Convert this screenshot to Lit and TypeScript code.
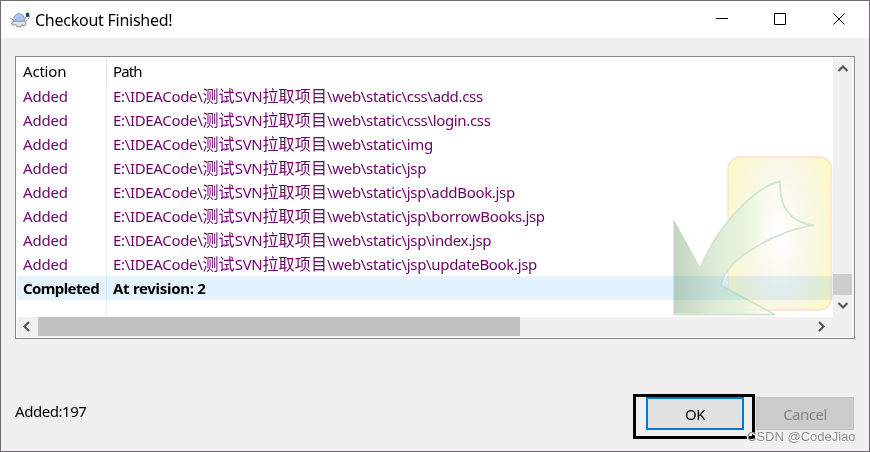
import { LitElement, html, css, svg } from "lit";
import { customElement } from "lit/decorators.js";

const TAILS = [
  "css\\add.css",
  "css\\login.css",
  "img",
  "jsp",
  "jsp\\addBook.jsp",
  "jsp\\borrowBooks.jsp",
  "jsp\\index.jsp",
  "jsp\\updateBook.jsp",
];

const chevron = (d: string) => html`<svg class="chev" width="20" height="20" viewBox="0 0 20 20">
  <path d=${d} fill="none" stroke="#555" stroke-width="2.2" />
</svg>`;

@customElement("app-root")
export class AppRoot extends LitElement {
  static styles = css`
    :host {
      display: block;
      width: 870px;
      height: 452px;
      box-sizing: border-box;
      overflow: hidden;
      position: relative;
      border: 1px solid #6c6a6c;
      background: #f0f0f0;
      color: #000;
      font: 15px/24px "Noto Sans", "Open Sans", "Noto Sans CJK SC", sans-serif;
    }
    * { box-sizing: border-box; }
    svg { display: block; }
    .title { height: 37px; background: #fff; display: flex; align-items: center; padding-left: 8px; }
    .name { flex: 1; padding-left: 4px; font-size: 16px; letter-spacing: -0.25px; }
    .controls { width: 176px; height: 37px; }
    .list {
      margin: 18px 14px 0;
      width: 840px;
      height: 283px;
      border: 1px solid #828790;
      background: #fff;
      padding: 1px;
      display: grid;
      grid-template-columns: 816px 20px;
      grid-template-rows: 259px 20px;
      position: relative;
    }
    .rows { position: relative; overflow: hidden; display: flex; flex-direction: column; }
    .row { display: grid; grid-template-columns: 90px 1fr; height: 24px; flex: none; color: #6b0068; white-space: pre; letter-spacing: -0.2px; }
    .row > div { padding-left: 6px; }
    .row > div:first-child { border-right: 1px solid #e8f3fd; }
    .row.head { height: 26px; line-height: 27px; color: #000; }
    .row.head > div:first-child { border-right-color: #e5e5e5; }
    .row.head > div:last-child { letter-spacing: -0.9px; }
    .row.done { background: #e5f3ff; color: #000; font-weight: 700; letter-spacing: -0.6px; }
    .row.done > div:last-child { letter-spacing: -0.3px; }
    .row.done > div:first-child { border-right-color: #cce8ff; }
    .row.rest { height: 16px; }
    .lat { letter-spacing: -0.33px; }
    .cjk { font-family: "Noto Sans CJK SC", sans-serif; font-size: 16px; line-height: 20px; letter-spacing: 0.15px; }
    .art { position: absolute; left: 655px; top: 97px; mix-blend-mode: multiply; }
    .vbar { background: #f0f0f0; display: flex; flex-direction: column; width: 20px; }
    .vthumb { height: 21px; width: 19px; background: #cdcdcd; margin-top: 196px; flex: none; }
    .hbar { grid-column: 1 / 3; background: #f0f0f0; display: flex; align-items: flex-start; }
    .hthumb { width: 482px; height: 19px; background: #c1c1c1; margin-left: 1px; }
    .hbar .chev:last-child { margin-left: 291px; }
    .foot { display: flex; padding: 55px 14px 0; height: 110px; }
    .count { flex: 1; padding-top: 5px; letter-spacing: -0.45px; }
    .frame { width: 122px; height: 45px; border: 3px solid #000; padding-left: 10px; }
    .btn { display: block; width: 98px; height: 33px; padding: 0; font: inherit; text-align: center; }
    .ok { border: 2px solid #0078d7; background: #e1e1e1; color: #000; letter-spacing: -0.5px; }
    .cancel { margin: 3px 1px 0 1px; border: 1px solid #bfbfbf; background: #ccc; color: #838383; letter-spacing: -0.5px; }
    .mark {
      position: absolute;
      left: 746px;
      top: 426px;
      font: 13px/20px "Liberation Sans", sans-serif;
      color: #8a8a8a;
      text-shadow: -1px 0 #fff, 0 1px #fff;
      white-space: pre;
    }
  `;

  turtle() {
    return svg`<svg width="22" height="18" viewBox="0 0 22 18">
      <path d="M1 7L5 9.5" stroke="#888" fill="none"/>
      <path d="M4 10L2.5 13L5 14.5L6.5 13L8 15.8H12L13 13.5L15 15.2L17 13L16 10Z" fill="#e2e2e2" stroke="#808080" stroke-width=".9"/>
      <path d="M4.5 9.5Q5 2.6 10 2.6Q15 2.6 15.8 9.5Q10 11.5 4.5 9.5Z" fill="#a9c4fb" stroke="#8094c4" stroke-width=".9"/>
      <path d="M15.5 9L17 5.5L20.5 5L19.5 8L16.5 10.5Z" fill="#eee" stroke="#999" stroke-width=".8"/>
      <ellipse cx="18.6" cy="3.8" rx="1.8" ry="2.2" fill="#17465c"/>
    </svg>`;
  }

  art() {
    return html`<svg class="art" width="162" height="162" viewBox="672 155 162 162">
      <defs>
        <radialGradient id="sheet" gradientUnits="userSpaceOnUse" cx="0" cy="0" r="1" gradientTransform="translate(780 233) scale(55 125)">
          <stop offset="0" stop-color="#fff" />
          <stop offset=".5" stop-color="#f9f7e9" />
          <stop offset=".8" stop-color="#faf7d8" />
          <stop offset="1" stop-color="#fcfac6" />
        </radialGradient>
        <linearGradient id="leaf" gradientUnits="userSpaceOnUse" x1="673" y1="0" x2="780" y2="0">
          <stop offset="0" stop-color="#c3d4c0" />
          <stop offset=".4" stop-color="#deecd9" />
          <stop offset=".65" stop-color="#e6f3da" />
          <stop offset="1" stop-color="#fff" stop-opacity="0" />
        </linearGradient>
      </defs>
      <rect x="728.3" y="157" width="103" height="153" rx="12" fill="url(#sheet)" stroke="#fde6d4" stroke-width="2" />
      <path d="M720.8 285L727.5 275V289Z" fill="#f2f3ff" />
      <path
        d="M673.5 219L700.5 267.5Q716 230 745 203Q765 184 780 181.5Q779 221 814 225.3C785 228 726 256 720.8 285.5L775 314.5H673.5Z"
        fill="url(#leaf)"
      />
      <path
        d="M700.5 267.5Q716 230 745 203Q765 184 780 181.5Q779 221 814 225.3C785 228 726 256 720.8 285.5L775 314.5H673.5"
        fill="none" stroke="#d2e5d0" stroke-width="1.8"
      />
    </svg>`;
  }

  render() {
    return html`
      <div class="title">
        ${this.turtle()}
        <div class="name">Checkout Finished!</div>
        <svg class="controls" viewBox="0 0 176 37" fill="none" stroke="#000">
          <path d="M23 17.5H35M81.5 12.5H92.5V23.5H81.5ZM140.5 12.5L151.5 23.5M151.5 12.5L140.5 23.5" />
        </svg>
      </div>
      <div class="list">
        <div class="rows">
          <div class="row head"><div>Action</div><div>Path</div></div>
          ${TAILS.map(
            (t) => html`<div class="row"><div>Added</div><div><span class="lat">E:\\IDEACode\\</span><span class="cjk">测试</span><span class="lat">SVN</span><span class="cjk">拉取项目</span><span class="lat">\\web\\static\\${t}</span></div></div>`
          )}
          <div class="row done"><div>Completed</div><div>At revision: 2</div></div>
          <div class="row rest"><div></div><div></div></div>
          ${this.art()}
        </div>
        <div class="vbar">
          ${chevron("M5.5 13L10 8.5L14.5 13")}
          <div class="vthumb"></div>
          ${chevron("M5.5 8L10 12.5L14.5 8")}
        </div>
        <div class="hbar">
          ${chevron("M12 5L7.5 9.5L12 14")}
          <div class="hthumb"></div>
          ${chevron("M8 5L12.5 9.5L8 14")}
        </div>
      </div>
      <div class="foot">
        <div class="count">Added:197</div>
        <div class="frame"><button class="btn ok">OK</button></div>
        <button class="btn cancel" disabled>Cancel</button>
      </div>
      <div class="mark">CSDN @CodeJiao</div>
    `;
  }
}
